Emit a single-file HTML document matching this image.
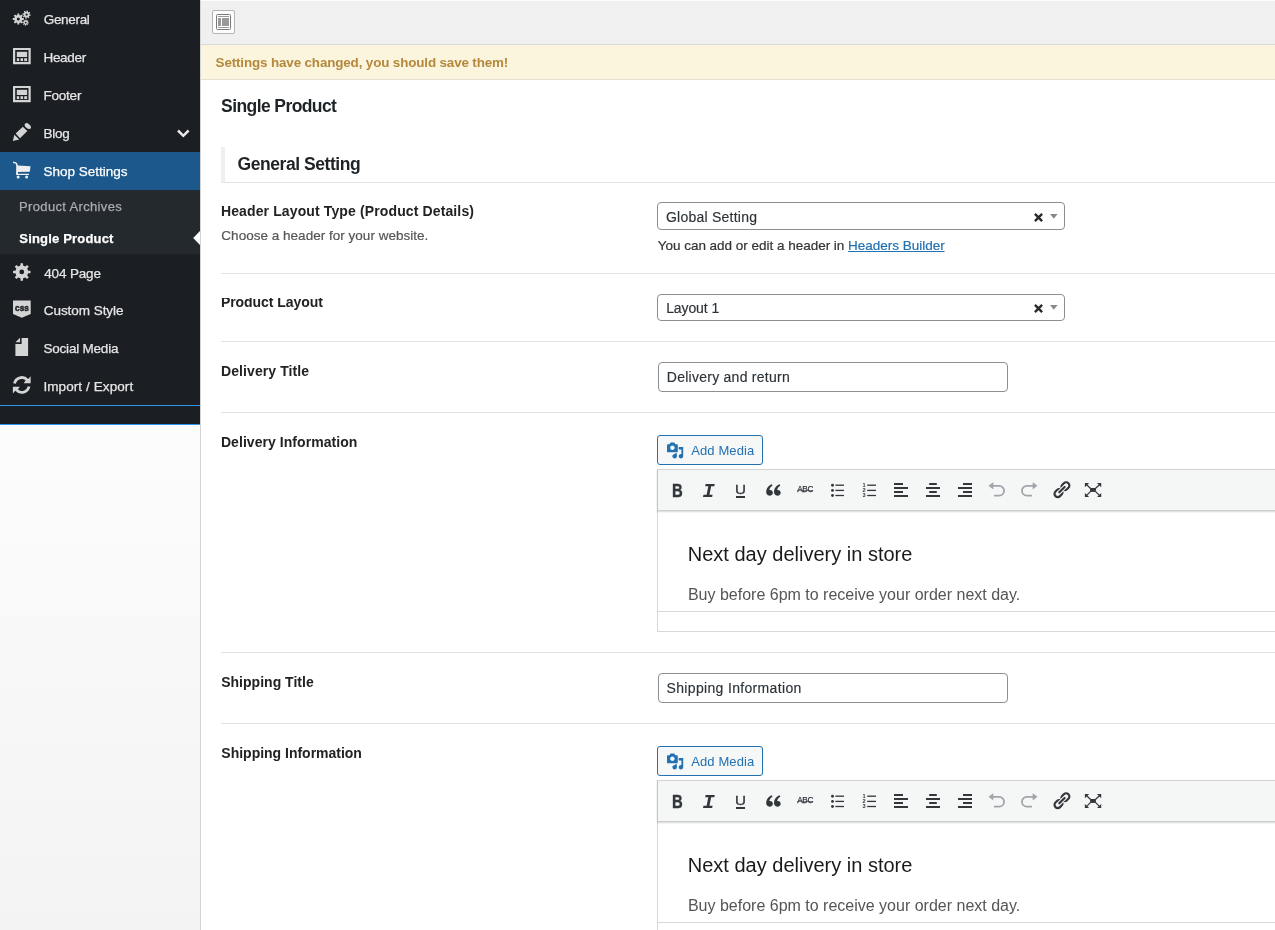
<!DOCTYPE html>
<html><head><meta charset="utf-8"><title>Theme Options</title>
<style>
*{box-sizing:border-box;margin:0;padding:0}
html,body{width:1275px;height:930px;overflow:hidden;background:#fff;font-family:"Liberation Sans",sans-serif;color:#1d2327;font-size:13px}
span{white-space:nowrap}
#wrap{position:absolute;left:0;top:0;width:1275px;height:930px;overflow:hidden;will-change:transform}
#side{position:absolute;left:0;top:0;width:200px;height:425px;background:#1b1e23}
#bl1,#bl2{position:absolute;left:0;width:200px;height:1px;background:#2b96ee}
#sidebg{position:absolute;left:0;top:425px;width:200px;height:505px;background:linear-gradient(to bottom,#fcfcfc 0,#f8f8f8 50%,#f3f3f3 100%)}
#sideline{position:absolute;left:200px;top:0;width:1px;height:930px;background:#d4d4d4}
#sicons{position:absolute;left:0;top:0}
.mi{position:absolute;left:0;width:200px;height:38px;-webkit-text-stroke:0.25px;color:#e6e6e6;font-size:13.5px;line-height:39.4px;padding-left:43.4px}
.mi.act{background:#1c588c;color:#fff}
.sub{position:absolute;left:0;top:190px;width:200px;height:64px;background:#24292e}
.sub div{position:absolute;left:19.2px;font-size:13px;color:#a9acaf;line-height:18px;-webkit-text-stroke:0.25px}
#top{position:absolute;left:201px;top:0;width:1074px;height:45px;background:#f0f0f0;border-bottom:1px solid #d9d9d9;border-top:1px solid #fcfcfc}
#tbtn{position:absolute;left:11px;top:9px;width:23px;height:24px;border:1px solid #b4b4b4;border-radius:2px;background:#fdfdfd}
#tbtn i{position:absolute;background:#999}
#notice{position:absolute;left:201px;top:45px;width:1074px;height:35px;background:#fbf5dd;border-bottom:1px solid #e4e0d0;color:#b5883e;font-weight:bold;font-size:13.4px;line-height:35.6px;padding-left:14.6px}
h2{position:absolute;left:221px;top:94px;font-size:17.5px;font-weight:bold;line-height:24px;color:#1d2327}
#sec{position:absolute;left:221px;top:147px;width:1054px;height:36px;border-left:4px solid #efefef;border-bottom:1px solid #e3e3e3;font-size:17.5px;font-weight:bold;line-height:35px;padding-left:12.6px;color:#1d2327}
.lbl{position:absolute;left:221.3px;font-size:14px;font-weight:bold;color:#222;line-height:18px}
.desc{position:absolute;left:221.3px;font-size:13.5px;color:#555;line-height:18px;-webkit-text-stroke:0.2px}
.hr{position:absolute;left:221px;width:1054px;height:1px;background:#e2e2e2}
.sel{position:absolute;left:657px;width:408px;height:28px;border:1px solid #8e8e8e;border-radius:4px;background:#fff;font-size:14px;line-height:28px;padding-left:8.3px;color:#2c3338}
.sel .x{position:absolute;left:376px;top:9.5px;width:9px;height:9px}
.sel .ar{position:absolute;left:392.3px;top:11px;width:7.6px;height:4.8px}
.s2 .x{top:8.6px}.s2 .ar{top:10px}
.inp,.sel{-webkit-text-stroke:0.15px}
.inp{position:absolute;left:658px;width:350px;height:30px;border:1px solid #8c8f94;border-radius:4px;background:#fff;font-size:14px;line-height:28px;padding-left:8.4px;color:#2c3338}
.ed{position:absolute;left:657px;width:630px;height:198px}
.am{position:absolute;left:0;top:0;width:106px;height:30px;border:1px solid #2271b1;border-radius:3px;background:#f6f7f7;color:#2271b1;font-size:13px;line-height:29.6px;padding-left:33.2px}
.tb{position:absolute;left:0;top:34px;width:630px;height:42px;background:#f5f6f6;border:1px solid #d3d4d6;border-left-color:#c3c4c7;border-bottom:1px solid #cdcdcd;box-shadow:0 1px 1.5px rgba(0,0,0,.16);z-index:1}
.body{position:absolute;left:0;top:76px;width:630px;height:100px;border-left:1px solid #d8d8da;background:#fff;font-family:"Liberation Sans",sans-serif}
.body .h{position:absolute;left:30.3px;top:29.7px;font-size:20px;color:#1a1a1a;line-height:26px}
.body .p{position:absolute;left:30.3px;top:74.2px;font-size:16px;color:#555;line-height:20px}
.st{position:absolute;left:0;top:176px;width:630px;height:21px;border:1px solid #d8d8da;background:#fff}
.eic{position:absolute;left:0;top:0;z-index:2}
.tB,.tI,.tU,.tS,.tN,.tUl{z-index:2}
.tB,.tI,.tU,.tS,.tN{position:absolute;color:#32373c;line-height:1}
.tB{left:14.7px;top:47.7px;font-size:17.9px;font-weight:bold;-webkit-text-stroke:0.4px #32373c;transform:scaleX(.83);transform-origin:0 0}
.tI{left:45.6px;top:46.7px;font-size:20.4px;font-weight:bold;font-style:italic;font-family:"Liberation Mono",monospace}
.tU{left:77.9px;top:47.6px;font-size:13.6px;-webkit-text-stroke:0.3px #32373c;transform:scaleX(1.12);transform-origin:0 0}
.tUl{position:absolute;left:79px;top:61px;width:8.9px;height:1.9px;background:#32373c}
.tS{left:140.3px;top:51.3px;font-size:8.2px;letter-spacing:-0.4px;-webkit-text-stroke:0.25px #32373c}
.tS:after{content:'';position:absolute;left:0;top:4.1px;width:100%;height:1px;background:rgba(50,55,60,.6)}
.tN{left:205.6px;font-size:5.6px;font-weight:bold;line-height:6.4px}
</style></head><body>
<div id="wrap"><div id="side"></div><div id="bl1" style="top:405px"></div><div id="bl2" style="top:424px"></div><div id="sidebg"></div><div id="sideline"></div>
<div class="mi" style="top:0px"><span id="m1" style="letter-spacing:-0.320px;margin-left:0.34px;">General</span></div>
<div class="mi" style="top:38px"><span id="m2" style="letter-spacing:-0.271px;margin-left:0.02px;">Header</span></div>
<div class="mi" style="top:76px"><span id="m3" style="letter-spacing:-0.200px;margin-left:0.02px;">Footer</span></div>
<div class="mi" style="top:114px"><span id="m4" style="letter-spacing:-0.202px;margin-left:0.02px;">Blog</span></div>
<div class="mi act" style="top:152px"><span id="m5" style="letter-spacing:-0.011px;margin-left:0.15px;">Shop Settings</span></div>
<div class="sub"><div style="top:7.6px"><span id="s1" style="letter-spacing:0.343px;margin-left:-0.12px;">Product Archives</span></div><div style="top:40px;color:#fff;font-weight:bold"><span id="s2" style="letter-spacing:0.175px;margin-left:0.18px;">Single Product</span></div></div>
<div class="mi" style="top:254px"><span id="m6" style="letter-spacing:-0.151px;margin-left:0.84px;">404 Page</span></div>
<div class="mi" style="top:291px"><span id="m7" style="letter-spacing:-0.047px;margin-left:0.36px;">Custom Style</span></div>
<div class="mi" style="top:329px"><span id="m8" style="letter-spacing:-0.213px;margin-left:0.11px;">Social Media</span></div>
<div class="mi" style="top:367px"><span id="m9" style="letter-spacing:0.092px;margin-left:-0.03px;">Import / Export</span></div>
<svg id="sicons" width="200" height="425" viewBox="0 0 200 425" fill="#d3d5d4"><path fill-rule="evenodd" d="M22.18 18.04 L23.82 18.08 L23.82 19.92 L22.18 19.96 L21.73 21.06 L22.86 22.26 L21.56 23.56 L20.36 22.43 L19.26 22.88 L19.22 24.52 L17.38 24.52 L17.34 22.88 L16.24 22.43 L15.04 23.56 L13.74 22.26 L14.87 21.06 L14.42 19.96 L12.78 19.92 L12.78 18.08 L14.42 18.04 L14.87 16.94 L13.74 15.74 L15.04 14.44 L16.24 15.57 L17.34 15.12 L17.38 13.48 L19.22 13.48 L19.26 15.12 L20.36 15.57 L21.56 14.44 L22.86 15.74 L21.73 16.94Z M16.80 19.00 a1.50 1.50 0 1 0 3.00 0 a1.50 1.50 0 1 0 -3.00 0Z M29.50 14.47 L30.70 14.74 L30.43 16.06 L29.22 15.84 L28.74 16.56 L29.40 17.60 L28.27 18.34 L27.57 17.33 L26.73 17.50 L26.46 18.70 L25.14 18.43 L25.36 17.22 L24.64 16.74 L23.60 17.40 L22.86 16.27 L23.87 15.57 L23.70 14.73 L22.50 14.46 L22.77 13.14 L23.98 13.36 L24.46 12.64 L23.80 11.60 L24.93 10.86 L25.63 11.87 L26.47 11.70 L26.74 10.50 L28.06 10.77 L27.84 11.98 L28.56 12.46 L29.60 11.80 L30.34 12.93 L29.33 13.63Z M25.50 14.60 a1.10 1.10 0 1 0 2.20 0 a1.10 1.10 0 1 0 -2.20 0Z M27.88 22.29 L28.79 22.40 L28.69 23.41 L27.77 23.34 L27.46 23.92 L28.03 24.65 L27.24 25.29 L26.64 24.59 L26.01 24.78 L25.90 25.69 L24.89 25.59 L24.96 24.67 L24.38 24.36 L23.65 24.93 L23.01 24.14 L23.71 23.54 L23.52 22.91 L22.61 22.80 L22.71 21.79 L23.63 21.86 L23.94 21.28 L23.37 20.55 L24.16 19.91 L24.76 20.61 L25.39 20.42 L25.50 19.51 L26.51 19.61 L26.44 20.53 L27.02 20.84 L27.75 20.27 L28.39 21.06 L27.69 21.66Z M24.80 22.60 a0.90 0.90 0 1 0 1.80 0 a0.90 0.90 0 1 0 -1.80 0Z"/><path fill-rule="evenodd" d="M13 47.90H30.7V64.20H13Z M15.2 50.10V62.00H28.5V50.10Z"/><rect x="16.8" y="51.80" width="10.3" height="5.2"/><rect x="16.8" y="58.20" width="2.4" height="2.9"/><rect x="20.5" y="58.20" width="2.6" height="2.9"/><rect x="24.2" y="58.20" width="2.9" height="2.9"/><path fill-rule="evenodd" d="M13 85.90H30.7V102.20H13Z M15.2 88.10V100.00H28.5V88.10Z"/><rect x="16.8" y="89.80" width="10.3" height="5.2"/><rect x="16.8" y="96.20" width="2.4" height="2.9"/><rect x="20.5" y="96.20" width="2.6" height="2.9"/><rect x="24.2" y="96.20" width="2.9" height="2.9"/><path d="M12.8 141.1L14.4 134.7L19.2 139.5Z"/><path d="M15.7 133.5L22.8 126.8L27.3 130.9L20 138.3Z"/><ellipse cx="27.8" cy="126.1" rx="3.6" ry="2.2" transform="rotate(40 27.8 126.1)"/><g fill="#eeeeee"><path d="M13 161.8C15.5 161.6 17.2 162.4 17.6 164.6L18 165.4L30.5 166.3L29.8 171.8L18 172L18 173.7L29 173.7L29 175L16.1 175L16.2 165.5C16 163.8 15 163.2 13 163.1Z"/><circle cx="18.15" cy="177.05" r="1.5"/><circle cx="26.6" cy="177.05" r="1.5"/></g><path fill-rule="evenodd" d="M28.12 270.65 L30.47 270.73 L30.47 273.21 L28.12 273.29 L27.19 275.54 L28.80 277.25 L27.04 279.01 L25.33 277.40 L23.08 278.33 L23.00 280.68 L20.52 280.68 L20.44 278.33 L18.19 277.40 L16.48 279.01 L14.72 277.25 L16.33 275.54 L15.40 273.29 L13.05 273.21 L13.05 270.73 L15.40 270.65 L16.33 268.40 L14.72 266.69 L16.48 264.93 L18.19 266.54 L20.44 265.61 L20.52 263.26 L23.00 263.26 L23.08 265.61 L25.33 266.54 L27.04 264.93 L28.80 266.69 L27.19 268.40Z M19.36 271.97 a2.40 2.40 0 1 0 4.80 0 a2.40 2.40 0 1 0 -4.80 0Z"/><path d="M13 300.5H30.7V314.1L21.8 317.7L13 314.1Z"/><text x="21.9" y="310.9" text-anchor="middle" font-family="Liberation Sans, sans-serif" font-weight="bold" font-size="8.6" fill="#1a1d23" stroke="#1a1d23" stroke-width="0.5" textLength="13.6" lengthAdjust="spacingAndGlyphs">css</text><path d="M15.4 343.9H21.6V338H28.1V356.1H15.4Z M15.4 342.3L20.04 337.85V342.3Z"/><path d="M13.15 383.14 A8.80 8.80 0 0 1 28.30 379.08 L30.66 376.37 L30.66 383.27 L23.76 383.27 L25.62 380.37 A6.00 6.00 0 0 0 15.89 383.72Z"/><path d="M13.15 383.14 A8.80 8.80 0 0 1 28.30 379.08 L30.66 376.37 L30.66 383.27 L23.76 383.27 L25.62 380.37 A6.00 6.00 0 0 0 15.89 383.72Z" transform="rotate(180 21.76 384.97)"/><path d="M178 130.5L183.3 135.8L188.6 130.5" fill="none" stroke="#e8e8e8" stroke-width="2.5"/><path d="M200 231L193.2 238L200 245Z" fill="#ffffff"/></svg>
<div id="top"><div id="tbtn"><i style="left:3px;top:3px;width:15px;height:15.7px;background:#fff;border:1px solid #7a7a7a;border-radius:1.5px"></i><i style="left:5.2px;top:4.9px;width:10.8px;height:1px"></i><i style="left:5.2px;top:7.1px;width:2.6px;height:7.8px"></i><i style="left:9px;top:7.1px;width:7px;height:7.8px"></i><i style="left:5.2px;top:15.9px;width:10.8px;height:1px"></i></div></div>
<div id="notice"><span id="n" style="letter-spacing:-0.132px;margin-left:-0.01px;">Settings have changed, you should save them!</span></div>
<h2><span id="h2" style="letter-spacing:-0.587px;margin-left:0.10px;">Single Product</span></h2>
<div id="sec"><span id="sect" style="letter-spacing:-0.444px;margin-left:-0.06px;">General Setting</span></div>
<div class="lbl" style="top:202px"><span id="l1" style="letter-spacing:0.124px;margin-left:-0.37px;">Header Layout Type (Product Details)</span></div>
<div class="desc" style="top:226.6px"><span id="d1" style="letter-spacing:0.020px;margin-left:0.06px;">Choose a header for your website.</span></div>
<div class="sel" style="top:202px"><span id="v1" style="letter-spacing:0.235px;margin-left:-0.34px;">Global Setting</span><svg class="x" viewBox="0 0 9 9"><path d="M0.9 0.9L8.1 8.1M8.1 0.9L0.9 8.1" stroke="#2a2a2a" stroke-width="2.4"/></svg><svg class="ar" viewBox="0 0 7.6 4.8"><path d="M0 0H7.6L3.8 4.8Z" fill="#888"/></svg></div>
<div class="desc" style="left:657.5px;top:236.6px;color:#333"><span id="d2" style="letter-spacing:-0.017px;margin-left:0.21px;">You can add or edit a header in <u style="color:#2271b1">Headers Builder</u></span></div>
<div class="hr" style="top:273px"></div>
<div class="lbl" style="top:298px;height:14px;overflow:hidden"><div style="margin-top:-5px"><span id="l2" style="letter-spacing:-0.062px;margin-left:-0.35px;">Product Layout</span></div></div>
<div class="sel s2" style="top:294px;height:27px;line-height:26px"><span id="v2" style="letter-spacing:-0.096px;margin-left:-0.17px;">Layout 1</span><svg class="x" viewBox="0 0 9 9"><path d="M0.9 0.9L8.1 8.1M8.1 0.9L0.9 8.1" stroke="#2a2a2a" stroke-width="2.4"/></svg><svg class="ar" viewBox="0 0 7.6 4.8"><path d="M0 0H7.6L3.8 4.8Z" fill="#888"/></svg></div>
<div class="hr" style="top:341px"></div>
<div class="lbl" style="top:362px"><span id="l3" style="letter-spacing:0.098px;margin-left:-0.35px;">Delivery Title</span></div>
<div class="inp" style="top:362px"><span id="v3" style="letter-spacing:0.259px;margin-left:-0.64px;">Delivery and return</span></div>
<div class="hr" style="top:412px"></div>
<div class="lbl" style="top:433px"><span id="l4" style="letter-spacing:0.057px;margin-left:-0.38px;">Delivery Information</span></div>
<div class="ed" style="top:435px"><div class="am"><span id="aam" style="letter-spacing:0.117px;margin-left:0.02px;">Add Media</span></div><div class="tb"></div><div class="body"><div class="h"><span id="ah" style="margin-left:-0.50px;">Next day delivery in store</span></div><div class="p"><span id="ap" style="margin-left:-0.40px;">Buy before 6pm to receive your order next day.</span></div></div><div class="st"></div><svg class="eic" width="618" height="100" viewBox="0 0 618 100"><g fill="#32373c"><path d="M112.60 60.70c-2.2 0 -3.4 -1.6 -3.4 -3.6c0 -3.6 2.4 -6.6 5.6 -7.8l0.7 1.4c-1.7 0.9 -2.9 2.6 -3.1 4.4c0.2 -0.05 0.4 -0.1 0.7 -0.1c1.6 0 2.8 1.3 2.8 2.8c0 1.7 -1.4 2.9 -3.3 2.9z"/><path d="M120.40 60.70c-2.2 0 -3.4 -1.6 -3.4 -3.6c0 -3.6 2.4 -6.6 5.6 -7.8l0.7 1.4c-1.7 0.9 -2.9 2.6 -3.1 4.4c0.2 -0.05 0.4 -0.1 0.7 -0.1c1.6 0 2.8 1.3 2.8 2.8c0 1.7 -1.4 2.9 -3.3 2.9z"/><circle cx="175.50" cy="50.20" r="1.45"/><rect x="178.40" y="49.55" width="8.6" height="1.3"/><rect x="210.20" y="49.55" width="8.8" height="1.3"/><circle cx="175.50" cy="55.40" r="1.45"/><rect x="178.40" y="54.75" width="8.6" height="1.3"/><rect x="210.20" y="54.75" width="8.8" height="1.3"/><circle cx="175.50" cy="60.50" r="1.45"/><rect x="178.40" y="59.85" width="8.6" height="1.3"/><rect x="210.20" y="59.85" width="8.8" height="1.3"/><rect x="237.00" y="48.00" width="9" height="2"/><rect x="272.20" y="48.00" width="7.6" height="2"/><rect x="306.00" y="48.00" width="9" height="2"/><rect x="237.00" y="52.00" width="14" height="2"/><rect x="269.00" y="52.00" width="14.0" height="2"/><rect x="301.00" y="52.00" width="14" height="2"/><rect x="237.00" y="56.00" width="9" height="2"/><rect x="272.20" y="56.00" width="7.6" height="2"/><rect x="306.00" y="56.00" width="9" height="2"/><rect x="237.00" y="60.00" width="14" height="2"/><rect x="269.00" y="60.00" width="14.0" height="2"/><rect x="301.00" y="60.00" width="14" height="2"/><path transform="translate(394.45 44.65)" d="M17.74 2.76c1.68 1.69 1.68 4.41 0 6.1l-1.53 1.52c-1.12 1.12-2.7 1.47-4.14 1.09l2.62-2.61.76-.77.76-.76c.84-.84.84-2.2 0-3.04-.84-.85-2.2-.85-3.04 0l-.77.76-3.38 3.38c-.37-1.44-.02-3.02 1.1-4.14l1.52-1.53c1.69-1.68 4.42-1.68 6.1 0zM8.59 13.43l5.34-5.34c.42-.42.42-1.1 0-1.52-.44-.43-1.13-.39-1.53 0l-5.33 5.34c-.42.42-.42 1.1 0 1.52.44.43 1.13.39 1.52 0zm-.76 2.29l4.14-4.15c.38 1.44.03 3.02-1.09 4.14l-1.52 1.53c-1.69 1.68-4.41 1.68-6.1 0-1.68-1.69-1.68-4.42 0-6.1l1.53-1.52c1.12-1.12 2.7-1.47 4.14-1.1l-4.14 4.15c-.85.84-.85 2.2 0 3.05.84.84 2.2.84 3.04 0z"/><rect x="433.10" y="53.00" width="5.8" height="3.9"/><path d="M427.90 48.00h4.2l-4.2 4.2z"/><path d="M444.20 48.00h-4.2l4.2 4.2z"/><path d="M427.90 62.10h4.2l-4.2 -4.2z"/><path d="M444.20 62.10h-4.2l4.2 -4.2z"/><path d="M429.40 49.50L433.60 53.50M442.70 49.50L438.40 53.50M429.40 60.60L433.60 56.40M442.70 60.60L438.40 56.40" stroke="#32373c" stroke-width="1.25" fill="none"/></g><path d="M331.50 50.80L336.30 47.20V54.50Z" fill="#a0a5aa"/><path d="M336.00 50.90H342.20a4.85 4.85 0 0 1 0 9.7H337.00" fill="none" stroke="#a0a5aa" stroke-width="1.8"/><g transform="translate(712.00 0) scale(-1 1)"><path d="M331.50 50.80L336.30 47.20V54.50Z" fill="#a0a5aa"/><path d="M336.00 50.90H342.20a4.85 4.85 0 0 1 0 9.7H337.00" fill="none" stroke="#a0a5aa" stroke-width="1.8"/></g><path fill="#2271b1" transform="translate(9.1 6.5) scale(0.9)" d="M13 11V4c0-.55-.45-1-1-1h-1.670L9 1H5L3.670 3H2c-.55 0-1 .45-1 1v7c0 .55.45 1 1 1h10c.55 0 1-.45 1-1zM7 4.500c1.380 0 2.500 1.120 2.500 2.500S8.380 9.500 7 9.500 4.500 8.380 4.500 7 5.620 4.500 7 4.500zM14 6h5v10.500c0 1.380-1.120 2.500-2.500 2.500S14 17.880 14 16.500s1.120-2.500 2.500-2.500c.170 0 .340.020.5.050V9h-3V6zm-4 8.050V13h2v3.500c0 1.380-1.120 2.500-2.500 2.500S7 17.880 7 16.500 8.120 14 9.500 14c.170 0 .340.020.5.050z"/></svg><div class="tB"><span id="aB" style="">B</span></div><div class="tI"><span id="aI" style="">I</span></div><div class="tU"><span id="aU" style="">U</span></div><div class="tUl"></div><div class="tS"><span id="aS" style="">ABC</span></div><div class="tN" style="top:47.0px">1</div><div class="tN" style="top:52.2px">2</div><div class="tN" style="top:57.3px">3</div></div>
<div class="hr" style="top:652px"></div>
<div class="lbl" style="top:673px"><span id="l5" style="letter-spacing:0.021px;margin-left:-0.15px;">Shipping Title</span></div>
<div class="inp" style="top:673px"><span id="v5" style="letter-spacing:0.333px;margin-left:-0.84px;">Shipping Information</span></div>
<div class="hr" style="top:723px"></div>
<div class="lbl" style="top:744px"><span id="l6" style="letter-spacing:-0.010px;margin-left:0.06px;">Shipping Information</span></div>
<div class="ed" style="top:746px"><div class="am"><span id="bam" style="letter-spacing:0.117px;margin-left:0.02px;">Add Media</span></div><div class="tb"></div><div class="body"><div class="h"><span id="bh" style="margin-left:-0.50px;">Next day delivery in store</span></div><div class="p"><span id="bp" style="margin-left:-0.40px;">Buy before 6pm to receive your order next day.</span></div></div><div class="st"></div><svg class="eic" width="618" height="100" viewBox="0 0 618 100"><g fill="#32373c"><path d="M112.60 60.70c-2.2 0 -3.4 -1.6 -3.4 -3.6c0 -3.6 2.4 -6.6 5.6 -7.8l0.7 1.4c-1.7 0.9 -2.9 2.6 -3.1 4.4c0.2 -0.05 0.4 -0.1 0.7 -0.1c1.6 0 2.8 1.3 2.8 2.8c0 1.7 -1.4 2.9 -3.3 2.9z"/><path d="M120.40 60.70c-2.2 0 -3.4 -1.6 -3.4 -3.6c0 -3.6 2.4 -6.6 5.6 -7.8l0.7 1.4c-1.7 0.9 -2.9 2.6 -3.1 4.4c0.2 -0.05 0.4 -0.1 0.7 -0.1c1.6 0 2.8 1.3 2.8 2.8c0 1.7 -1.4 2.9 -3.3 2.9z"/><circle cx="175.50" cy="50.20" r="1.45"/><rect x="178.40" y="49.55" width="8.6" height="1.3"/><rect x="210.20" y="49.55" width="8.8" height="1.3"/><circle cx="175.50" cy="55.40" r="1.45"/><rect x="178.40" y="54.75" width="8.6" height="1.3"/><rect x="210.20" y="54.75" width="8.8" height="1.3"/><circle cx="175.50" cy="60.50" r="1.45"/><rect x="178.40" y="59.85" width="8.6" height="1.3"/><rect x="210.20" y="59.85" width="8.8" height="1.3"/><rect x="237.00" y="48.00" width="9" height="2"/><rect x="272.20" y="48.00" width="7.6" height="2"/><rect x="306.00" y="48.00" width="9" height="2"/><rect x="237.00" y="52.00" width="14" height="2"/><rect x="269.00" y="52.00" width="14.0" height="2"/><rect x="301.00" y="52.00" width="14" height="2"/><rect x="237.00" y="56.00" width="9" height="2"/><rect x="272.20" y="56.00" width="7.6" height="2"/><rect x="306.00" y="56.00" width="9" height="2"/><rect x="237.00" y="60.00" width="14" height="2"/><rect x="269.00" y="60.00" width="14.0" height="2"/><rect x="301.00" y="60.00" width="14" height="2"/><path transform="translate(394.45 44.65)" d="M17.74 2.76c1.68 1.69 1.68 4.41 0 6.1l-1.53 1.52c-1.12 1.12-2.7 1.47-4.14 1.09l2.62-2.61.76-.77.76-.76c.84-.84.84-2.2 0-3.04-.84-.85-2.2-.85-3.04 0l-.77.76-3.38 3.38c-.37-1.44-.02-3.02 1.1-4.14l1.52-1.53c1.69-1.68 4.42-1.68 6.1 0zM8.59 13.43l5.34-5.34c.42-.42.42-1.1 0-1.52-.44-.43-1.13-.39-1.53 0l-5.33 5.34c-.42.42-.42 1.1 0 1.52.44.43 1.13.39 1.52 0zm-.76 2.29l4.14-4.15c.38 1.44.03 3.02-1.09 4.14l-1.52 1.53c-1.69 1.68-4.41 1.68-6.1 0-1.68-1.69-1.68-4.42 0-6.1l1.53-1.52c1.12-1.12 2.7-1.47 4.14-1.1l-4.14 4.15c-.85.84-.85 2.2 0 3.05.84.84 2.2.84 3.04 0z"/><rect x="433.10" y="53.00" width="5.8" height="3.9"/><path d="M427.90 48.00h4.2l-4.2 4.2z"/><path d="M444.20 48.00h-4.2l4.2 4.2z"/><path d="M427.90 62.10h4.2l-4.2 -4.2z"/><path d="M444.20 62.10h-4.2l4.2 -4.2z"/><path d="M429.40 49.50L433.60 53.50M442.70 49.50L438.40 53.50M429.40 60.60L433.60 56.40M442.70 60.60L438.40 56.40" stroke="#32373c" stroke-width="1.25" fill="none"/></g><path d="M331.50 50.80L336.30 47.20V54.50Z" fill="#a0a5aa"/><path d="M336.00 50.90H342.20a4.85 4.85 0 0 1 0 9.7H337.00" fill="none" stroke="#a0a5aa" stroke-width="1.8"/><g transform="translate(712.00 0) scale(-1 1)"><path d="M331.50 50.80L336.30 47.20V54.50Z" fill="#a0a5aa"/><path d="M336.00 50.90H342.20a4.85 4.85 0 0 1 0 9.7H337.00" fill="none" stroke="#a0a5aa" stroke-width="1.8"/></g><path fill="#2271b1" transform="translate(9.1 6.5) scale(0.9)" d="M13 11V4c0-.55-.45-1-1-1h-1.670L9 1H5L3.670 3H2c-.55 0-1 .45-1 1v7c0 .55.45 1 1 1h10c.55 0 1-.45 1-1zM7 4.500c1.380 0 2.500 1.120 2.500 2.500S8.380 9.500 7 9.500 4.500 8.380 4.500 7 5.620 4.500 7 4.500zM14 6h5v10.500c0 1.380-1.120 2.500-2.500 2.500S14 17.880 14 16.500s1.120-2.500 2.500-2.500c.170 0 .340.020.5.050V9h-3V6zm-4 8.050V13h2v3.500c0 1.380-1.120 2.500-2.500 2.500S7 17.880 7 16.500 8.120 14 9.500 14c.170 0 .340.020.5.050z"/></svg><div class="tB"><span id="bB" style="">B</span></div><div class="tI"><span id="bI" style="">I</span></div><div class="tU"><span id="bU" style="">U</span></div><div class="tUl"></div><div class="tS"><span id="bS" style="">ABC</span></div><div class="tN" style="top:47.0px">1</div><div class="tN" style="top:52.2px">2</div><div class="tN" style="top:57.3px">3</div></div></div>
</body></html>
